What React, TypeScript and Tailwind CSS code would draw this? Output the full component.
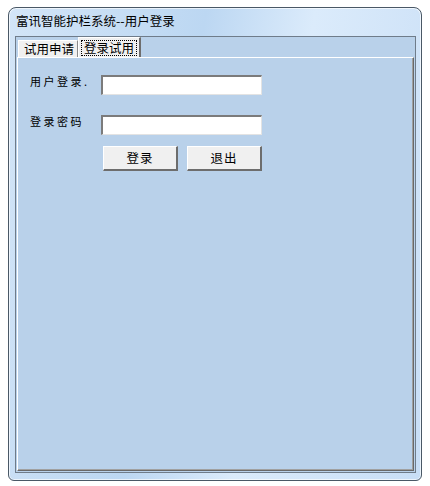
import React from "react";

const cjk = { fontFamily: '"Noto Sans CJK SC", "Noto Sans", sans-serif' };

export default function App() {
  return (
    <div className="w-[430px] h-[486px] bg-white pt-[7px] pl-[8px]" style={cjk}>
      <div className="w-[414px] h-[474px] rounded-t-[8px] rounded-b-[6px] border border-[#4a5866] flex flex-col bg-[linear-gradient(100deg,#d3e5f7_0%,#bcd7f2_40%,#dbebfb_62%,#c8def6_100%)] shadow-[inset_0_0_0_1px_rgba(255,255,255,0.65)]">
        <div className="h-[28px] pl-[7px] pb-[3px] flex items-center text-[12.5px] leading-[12px] text-black">
          富讯智能护栏系统--用户登录
        </div>
        <div className="h-[437px] mx-[5px] ml-[6px] border border-[#6f7c8a] bg-[#b9d1ea] flex flex-col">
          <div className="h-[20px] flex items-end pl-[2px] text-[12.5px] leading-[12px] text-black">
            <div className="h-[17px] w-[60px] bg-[#f0f0f0] border-t border-l border-white border-r border-r-[#8a8a8a] flex items-center pl-[5px]">
              试用申请
            </div>
            <div className="h-[20px] w-[63px] bg-[#f0f0f0] border-t border-l border-white border-r-2 border-r-[#6d6d6d] flex items-center justify-center">
              <span className="border border-dotted border-black px-[2px] py-[1px]">登录试用</span>
            </div>
          </div>
          <div className="flex-1 ml-[1px] mr-[1px] mb-[1px] border-t border-l border-white border-r border-b border-r-[#696969] border-b-[#696969] shadow-[inset_-1px_-1px_0_#a0a0a0] pl-[12px]">
            <div className="flex items-start mt-[17px]">
              <div className="w-[71px] mt-[1px] text-[11px] leading-[11px] tracking-[2.5px] text-black">用户登录.</div>
              <div className="w-[161px] h-[20px] bg-white border-t-2 border-l-2 border-[#7b7b7b] border-b border-r border-b-[#e3e3e3] border-r-[#e3e3e3]"></div>
            </div>
            <div className="flex items-start mt-[20px]">
              <div className="w-[71px] mt-[1px] text-[11px] leading-[11px] tracking-[2.5px] text-black">登录密码</div>
              <div className="w-[161px] h-[20px] bg-white border-t-2 border-l-2 border-[#7b7b7b] border-b border-r border-b-[#e3e3e3] border-r-[#e3e3e3]"></div>
            </div>
            <div className="flex mt-[11px] ml-[73px] gap-[9px]">
              <div className="w-[75px] h-[25px] bg-[#f0f0f0] border-t border-l border-white border-r-2 border-b-2 border-r-[#6d6d6d] border-b-[#6d6d6d] flex items-center justify-center text-[12.5px] tracking-[1px] text-black">登录</div>
              <div className="w-[75px] h-[25px] bg-[#f0f0f0] border-t border-l border-white border-r-2 border-b-2 border-r-[#6d6d6d] border-b-[#6d6d6d] flex items-center justify-center text-[12.5px] tracking-[1px] text-black">退出</div>
            </div>
          </div>
        </div>
      </div>
    </div>
  );
}
